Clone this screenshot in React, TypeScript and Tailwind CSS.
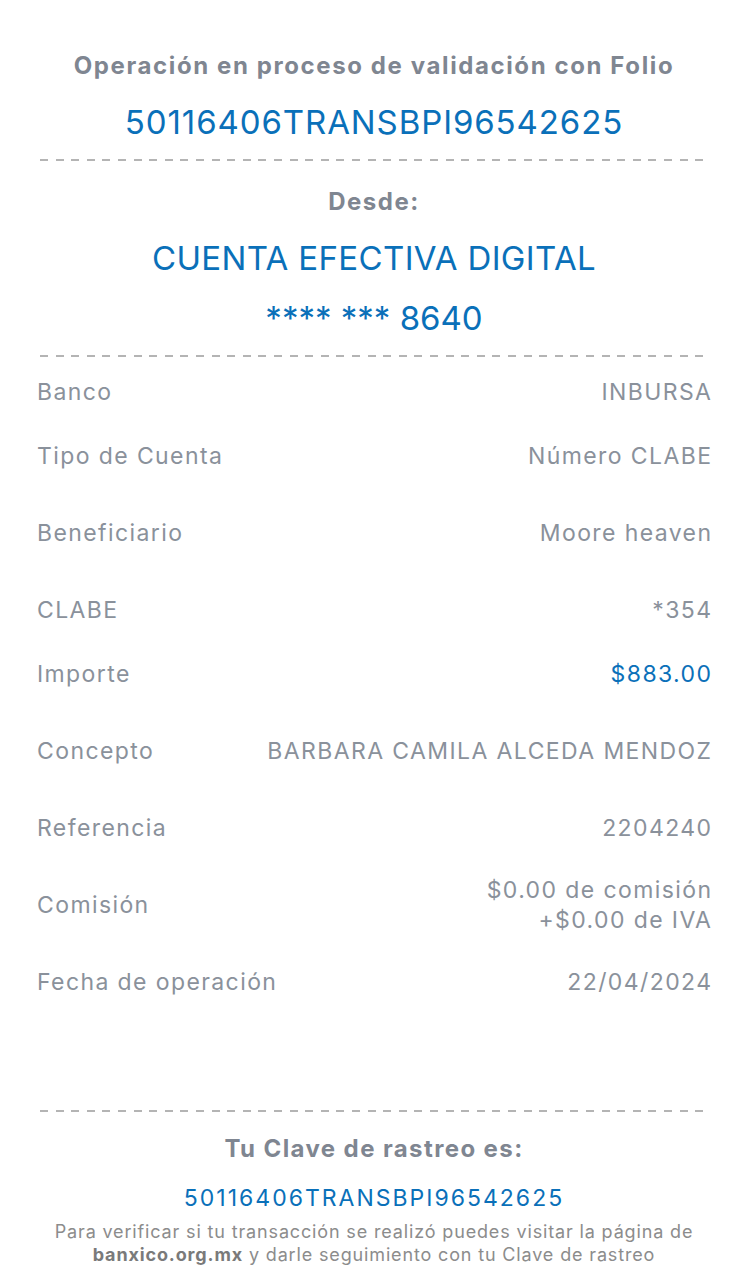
import React from "react";

const font = { fontFamily: "Inter, 'Noto Sans', sans-serif" };

function Dashes({ className = "" }: { className?: string }) {
  return (
    <div
      className={`mx-[40px] h-[2px] bg-[repeating-linear-gradient(90deg,#b4b4b4_0_8px,transparent_8px_15.6px)] ${className}`}
    />
  );
}

type Row = { label: string; value: React.ReactNode; mt: string; blue?: boolean };

const rows: Row[] = [
  { label: "Banco", value: "INBURSA", mt: "mt-[20px]" },
  { label: "Tipo de Cuenta", value: "Número CLABE", mt: "mt-[34px]" },
  { label: "Beneficiario", value: "Moore heaven", mt: "mt-[47px]" },
  { label: "CLABE", value: "*354", mt: "mt-[47px]" },
  { label: "Importe", value: "$883.00", mt: "mt-[34px]", blue: true },
  { label: "Concepto", value: "BARBARA CAMILA ALCEDA MENDOZ", mt: "mt-[47px]" },
  { label: "Referencia", value: "2204240", mt: "mt-[47px]" },
  {
    label: "Comisión",
    value: (
      <>
        $0.00 de comisión
        <br />
        +$0.00 de IVA
      </>
    ),
    mt: "mt-[32px]",
  },
  { label: "Fecha de operación", value: "22/04/2024", mt: "mt-[32px]" },
];

export default function App() {
  return (
    <div className="w-[748px] h-[1275px] bg-white overflow-hidden" style={font}>
      <div className="pt-[51px] text-center">
        <p className="text-[24px] leading-[30px] font-bold text-[#7f8691] tracking-[1.6px]">
          Operación en proceso de validación con Folio
        </p>
        <p className="mt-[22px] text-[33px] leading-[38px] text-[#0a70b9] tracking-[0.9px]">
          50116406TRANSBPI96542625
        </p>
      </div>
      <Dashes className="mt-[18px]" />

      <div className="text-center">
        <p className="mt-[27px] text-[24px] leading-[28px] font-bold text-[#7f8691] tracking-[1.5px]">
          Desde:
        </p>
        <p className="mt-[23px] text-[33px] leading-[38px] text-[#0a70b9] tracking-[0.35px]">
          CUENTA EFECTIVA DIGITAL
        </p>
        <p className="mt-[22px] text-[33px] leading-[38px] text-[#0a70b9]">**** *** 8640</p>
      </div>
      <Dashes className="mt-[18px]" />

      <div className="px-[37px]">
        {rows.map((r) => (
          <div key={r.label} className={`flex items-center justify-between ${r.mt}`}>
            <span className="text-[23px] leading-[30px] text-[#8a919b] tracking-[1.4px]">{r.label}</span>
            <span
              className={`-mr-[1.4px] text-right text-[23px] leading-[30px] tracking-[1.4px] ${
                r.blue ? "text-[#0a70b9]" : "text-[#8a919b]"
              }`}
            >
              {r.value}
            </span>
          </div>
        ))}
      </div>

      <Dashes className="mt-[113px]" />

      <div className="text-center">
        <p className="mt-[22px] text-[24px] leading-[30px] font-bold text-[#7f8691] tracking-[1.4px]">
          Tu Clave de rastreo es:
        </p>
        <p className="mt-[19px] text-[23px] leading-[30px] text-[#0a70b9] tracking-[2px]">
          50116406TRANSBPI96542625
        </p>
        <p className="mt-[7px] text-[18px] leading-[23px] text-[#8c8c8c] tracking-[0.85px]">
          Para verificar si tu transacción se realizó puedes visitar la página de
          <br />
          <span className="font-bold text-[#7a7a7a]">banxico.org.mx</span> y darle seguimiento con tu Clave de rastreo
        </p>
      </div>
    </div>
  );
}
